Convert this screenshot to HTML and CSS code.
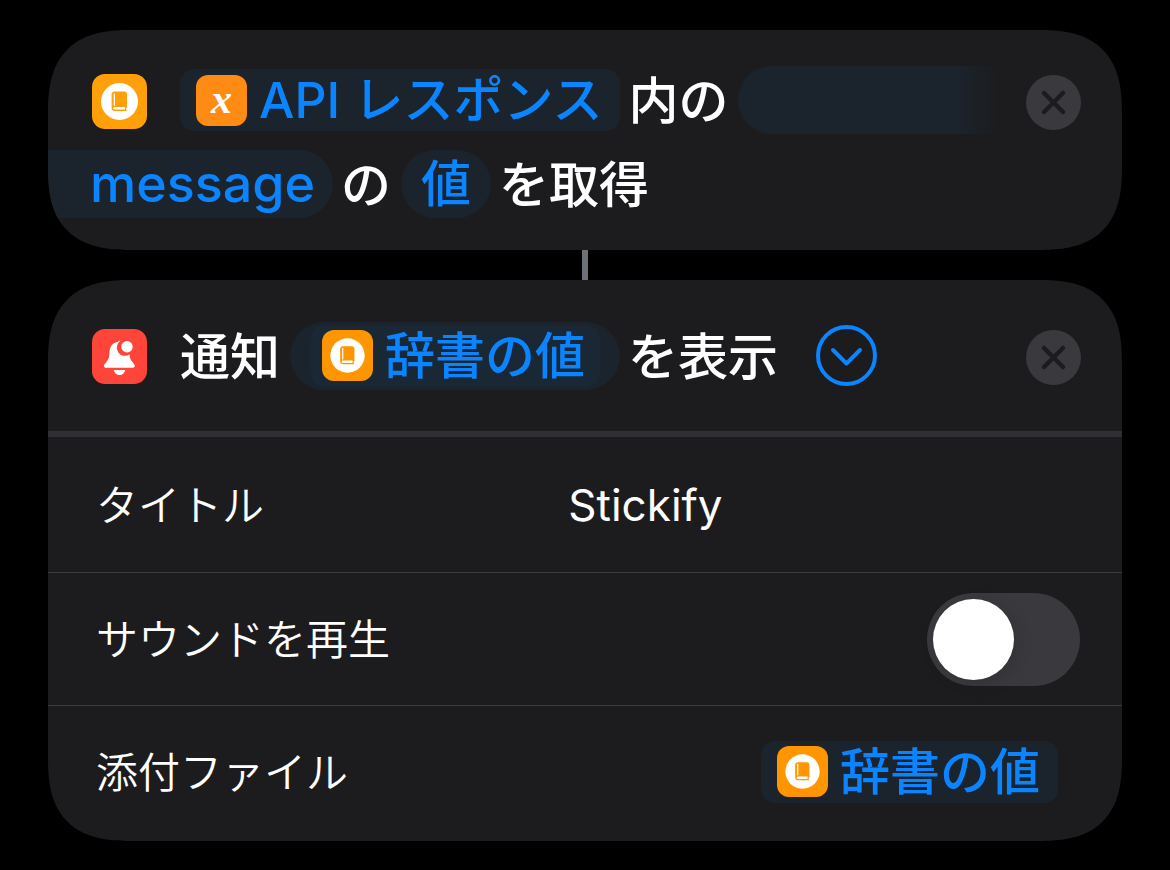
FILE: index.html
```html
<!DOCTYPE html>
<html lang="ja">
<head>
<meta charset="utf-8">
<meta name="viewport" content="width=device-width, initial-scale=1">
<title>ショートカット</title>
<link rel="stylesheet" href="styles.css">
</head>
<body>
<svg class="defs" aria-hidden="true">
  <symbol id="book" viewBox="0 0 55 55">
    <circle cx="27.500" cy="27.500" r="18.500" fill="#fff"/>
    <path fill="currentColor" fill-rule="evenodd" d="M23 17.500H32.200Q35 17.500 35 20.300V33.300L34.200 34.300V35.800L35 37H23Q19.600 37 19.600 33.700V20.500Q19.600 17.500 23 17.500ZM21.700 19.500V31.800H23V19.500ZM22.700 33Q21.200 33 21.200 34.300T22.700 35.600H33V33Z"/>
  </symbol>
  <symbol id="cross" viewBox="0 0 55 55">
    <path d="M18 18 37 37M37 18 18 37" fill="none" stroke="#1c1c1e" stroke-width="4.500" stroke-linecap="round"/>
  </symbol>
</svg>
<main class="flow">
  <section class="card lookup">
    <div class="line">
      <svg class="app-icon book"><use href="#book"/></svg>
      <button class="token" type="button"><span class="token-icon variable">x</span>API レスポンス</button>
      <span class="word">内の</span>
      <span class="pill-start"></span>
      <button class="delete" type="button" aria-label="削除"><svg><use href="#cross"/></svg></button>
    </div>
    <div class="line wrapped">
      <button class="pill pill-end" type="button">message</button>
      <span class="word">の</span>
      <button class="pill" type="button">値</button>
      <span class="word">を取得</span>
    </div>
  </section>
  <div class="connector"></div>
  <section class="card">
    <header class="line header">
      <svg class="app-icon bell" viewBox="0 0 55 55" aria-hidden="true">
        <path fill="#fff" d="M28.500 11.800Q27 11.700 25.500 13C20 14 17.800 18 17.500 23C17.300 28.500 16.500 30.500 14 33.500C12.500 35.300 11.500 36 12 37.500Q12.500 38.800 14 38.800H40.500Q42.300 38.800 42.700 37.500C43.200 36 42 35 40.700 33.300C38.500 30.500 37.700 29 37.500 25.500A7.800 7.800 0 0 1 28.500 11.800ZM21.800 41H33.200Q32 46 27.500 46T21.800 41Z"/>
        <circle cx="35" cy="17.800" r="5.700" fill="#fff"/>
      </svg>
      <span class="word">通知</span>
      <span class="pill holder"><button class="token inner" type="button"><svg class="token-icon"><use href="#book"/></svg>辞書の値</button></span>
      <span class="word">を表示</span>
      <button class="expand" type="button" aria-label="詳細">
        <svg viewBox="0 0 61 61"><circle cx="30.500" cy="30.500" r="28.500"/><path d="M17 25 30.500 38.500 44 25"/></svg>
      </button>
      <button class="delete" type="button" aria-label="削除"><svg><use href="#cross"/></svg></button>
    </header>
    <div class="row">
      <label class="label" for="title">タイトル</label>
      <input class="field" id="title" type="text" value="Stickify">
    </div>
    <div class="row">
      <label class="label" for="sound">サウンドを再生</label>
      <input class="toggle" id="sound" type="checkbox" role="switch">
    </div>
    <div class="row attachment">
      <span class="label">添付ファイル</span>
      <button class="token" type="button"><svg class="token-icon"><use href="#book"/></svg>辞書の値</button>
    </div>
  </section>
</main>
</body>
</html>
```
FILE: styles.css
```css
* { box-sizing: border-box; }
body {
  margin: 0;
  background: #000;
  color: #fff;
  font-family: Inter, "Noto Sans CJK JP", sans-serif;
  font-size: 50px;
  font-weight: 500;
  line-height: 60px;
}
button, input { font: inherit; color: inherit; border: 0; margin: 0; padding: 0; background: none; }
svg { display: block; }
.defs { position: absolute; width: 0; height: 0; }
.flow { padding: 30px 48px; }
.card { background: #1c1c1e; border-radius: 68px; overflow: hidden; }
@supports (corner-shape: superellipse(1.4)) {
  .card { border-radius: 84px; corner-shape: superellipse(1.4); }
}
.lookup { padding: 36px 0 32px; }
.line {
  display: flex;
  align-items: center;
  min-height: 68px;
  padding: 0 41px 0 44px;
  white-space: nowrap;
}
.wrapped { padding-left: 0; margin-top: 16px; }
.app-icon {
  flex: none;
  width: 55px;
  height: 55px;
  margin: 2px 33px 0 0;
  border-radius: 13px;
}
.book { background: #ff9f0a; color: #ff9f0a; }
.bell { background: #ff453a; }
.word { margin: 0 10px 0 8px; padding-top: 2px; }
.app-icon + .word { margin-left: 0; }
.token {
  display: flex;
  align-items: center;
  height: 62px;
  padding: 0 18px 0 16px;
  border-radius: 14px;
  background: #1b232c;
  color: #0a84ff;
}
.token-icon {
  flex: none;
  width: 51px;
  height: 51px;
  margin-right: 12px;
  border-radius: 12px;
  background: #ff9500;
  color: #ff9500;
}
.variable {
  background: #ff8a14;
  color: #fff;
  font: italic bold 42px/48px "Liberation Serif", serif;
  text-align: center;
}
.pill {
  display: flex;
  align-items: center;
  height: 68px;
  padding: 0 20px;
  border-radius: 34px;
  background: #1b232c;
  color: #0a84ff;
}
.pill-start {
  flex: 1;
  height: 68px;
  margin-right: 26px;
  border-radius: 34px 0 0 34px;
  background: linear-gradient(to right, #1b232c calc(100% - 42px), #1c1c1e);
}
.pill-end { padding: 0 18px 0 42px; border-radius: 0 34px 34px 0; font-size: 52px; }
.holder { padding: 0 20px; }
.inner { padding: 0 15px 0 12px; background: #1a2735; }
.delete {
  flex: none;
  width: 55px;
  height: 55px;
  margin: 4px 0 0 auto;
  border-radius: 50%;
  background: #3a3a3e;
}
.delete svg { width: 55px; height: 55px; }
.connector { width: 6px; height: 30px; margin: 0 auto; background: #6e7078; }
.header { min-height: 157px; border-bottom: 6px solid #303034; }
.expand { width: 61px; height: 61px; margin-left: 28px; }
.expand svg { fill: none; stroke: #0a84ff; stroke-width: 4; stroke-linecap: round; stroke-linejoin: round; }
.row {
  display: flex;
  align-items: center;
  justify-content: space-between;
  min-height: 135px;
  padding: 0 42px 0 48px;
  font-size: 42px;
  font-weight: 350;
}
.row + .row { min-height: 133px; border-top: 1px solid #3d3d40; }
.label { flex: none; width: 48%; padding-top: 2px; }
.field { flex: 1; min-width: 0; font-size: 44px; font-weight: 400; }
.row + .attachment { min-height: 136px; padding: 0 64px 4px 48px; }
.attachment .token { font-size: 50px; font-weight: 500; }
.toggle {
  appearance: none;
  width: 153px;
  height: 93px;
  padding: 6px;
  border-radius: 47px;
  background: #3a3a3e;
}
.toggle::before {
  content: "";
  display: block;
  width: 81px;
  height: 81px;
  border-radius: 50%;
  background: #fff;
  box-shadow: 4px 4px 16px #0002;
}
.toggle:checked { background: #30d158; }
.toggle:checked::before { margin-left: auto; }
```
